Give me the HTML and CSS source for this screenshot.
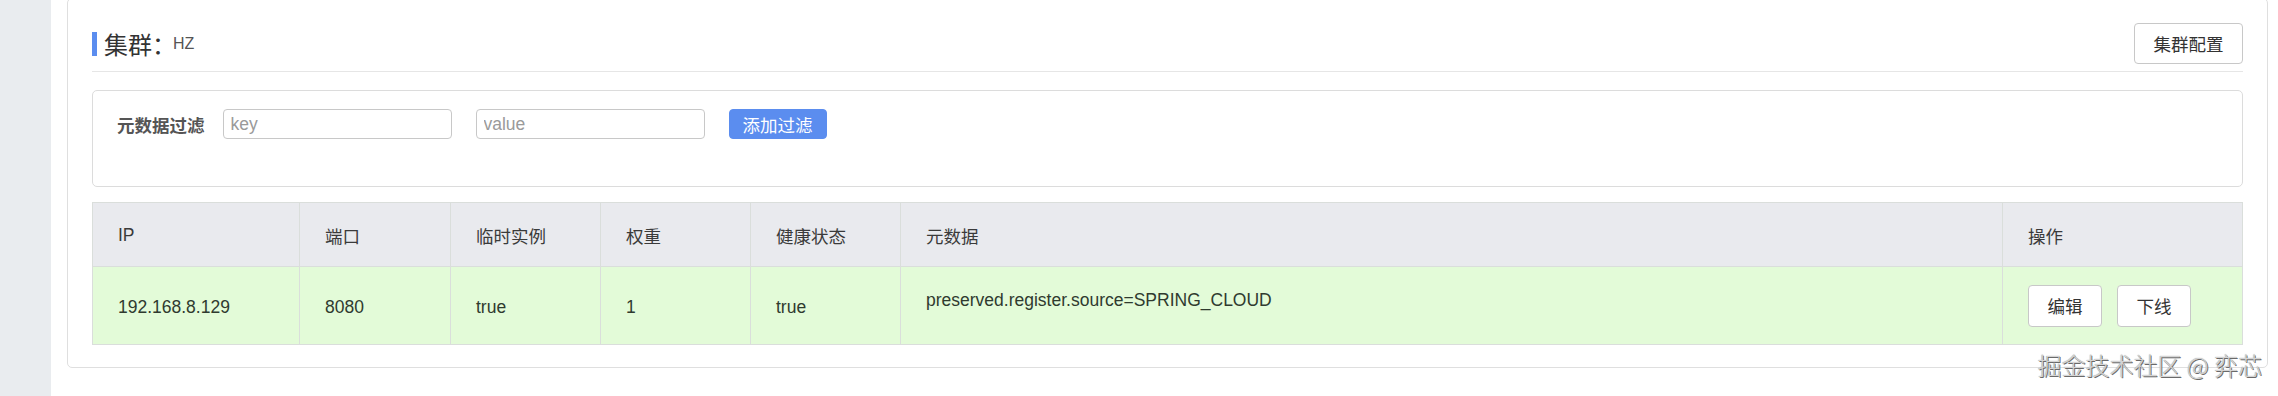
FILE: index.html
```html
<!DOCTYPE html>
<html lang="zh-CN">
<head>
    <meta charset="UTF-8">
    <meta name="viewport" content="width=device-width, initial-scale=1.0">
    <title>集群 - HZ</title>
    <link rel="stylesheet" href="styles.css">
</head>
<body>
    <div class="layout">
        <div class="sidebar"></div>

        <div class="main">
            <div class="card">
                <div class="card-head">
                    <div class="cluster-title">
                        <span class="accent"></span>
                        <span class="title-text">集群：</span>
                        <span class="cluster-name">HZ</span>
                    </div>
                    <button class="btn">集群配置</button>
                </div>

                <div class="filter-box">
                    <div class="filter-row">
                        <label class="filter-label">元数据过滤</label>
                        <input class="filter-input" type="text" placeholder="key">
                        <input class="filter-input" type="text" placeholder="value">
                        <button class="btn btn-primary">添加过滤</button>
                    </div>
                </div>

                <table class="instance-table">
                    <colgroup>
                        <col class="col-ip">
                        <col class="col-port">
                        <col class="col-small">
                        <col class="col-small">
                        <col class="col-small">
                        <col>
                        <col class="col-ops">
                    </colgroup>
                    <thead>
                        <tr>
                            <th>IP</th>
                            <th>端口</th>
                            <th>临时实例</th>
                            <th>权重</th>
                            <th>健康状态</th>
                            <th>元数据</th>
                            <th>操作</th>
                        </tr>
                    </thead>
                    <tbody>
                        <tr class="row-ok">
                            <td>192.168.8.129</td>
                            <td>8080</td>
                            <td>true</td>
                            <td>1</td>
                            <td>true</td>
                            <td><div class="meta">preserved.register.source=SPRING_CLOUD</div></td>
                            <td>
                                <div class="ops">
                                    <button class="btn btn-sm">编辑</button>
                                    <button class="btn btn-sm">下线</button>
                                </div>
                            </td>
                        </tr>
                    </tbody>
                </table>
            </div>
        </div>
    </div>

    <div class="watermark">掘金技术社区 @ 弈芯</div>
</body>
</html>
```

FILE: styles.css
```css
body {
    margin: 0;
    font-family: "Liberation Sans", "Noto Sans CJK SC", sans-serif;
    font-size: 17.5px;
    color: #333;
    background: #fff;
    overflow: hidden;
}

.layout {
    display: flex;
    height: 396px;
}

.sidebar {
    width: 51px;
    flex-shrink: 0;
    background: #e9ecef;
}

.main {
    flex: 1;
    padding: 0 10px 0 16px;
}

.card {
    margin-top: -2px;
    border: 1px solid #dfdfdf;
    border-radius: 5px;
    padding: 0 24px 22px;
}

.card-head {
    display: flex;
    align-items: center;
    justify-content: space-between;
    padding: 24px 0 7px;
    border-bottom: 1px solid #e6e6e6;
}

.cluster-title {
    display: flex;
    align-items: center;
}

.accent {
    width: 5px;
    height: 24px;
    background: #5b8def;
    margin-right: 7px;
}

.title-text {
    font-size: 24px;
    color: #333;
}

.cluster-name {
    font-size: 16px;
    color: #555;
    margin-left: -3px;
}

.btn {
    font-family: inherit;
    font-size: 17.5px;
    color: #333;
    background: #fff;
    border: 1px solid #c8c8c8;
    border-radius: 4px;
    height: 41px;
    width: 109px;
    padding: 0;
    cursor: pointer;
}

.btn-primary {
    height: 30px;
    width: 98px;
    margin-left: 24px;
    color: #fff;
    background: #5b8def;
    border-color: #5b8def;
}

.btn-sm {
    width: 74px;
    height: 42px;
}

.filter-box {
    margin-top: 18px;
    border: 1px solid #dcdcdc;
    border-radius: 5px;
    padding: 18px 24px 47px;
}

.filter-row {
    display: flex;
    align-items: center;
}

.filter-label {
    font-weight: bold;
    color: #555;
    margin-right: 18px;
}

.filter-input {
    width: 229px;
    height: 30px;
    box-sizing: border-box;
    border: 1px solid #c8c8c8;
    border-radius: 4px;
    padding: 0 7px;
    font-family: inherit;
    font-size: 17.5px;
    color: #333;
}

.filter-input + .filter-input {
    margin-left: 24px;
}

.filter-input::placeholder {
    color: #9a9a9a;
}

.instance-table {
    margin-top: 15px;
    width: 100%;
    table-layout: fixed;
    border-collapse: collapse;
}

.col-ip { width: 207px; }
.col-port { width: 151px; }
.col-small { width: 150px; }
.col-ops { width: 240px; }

.instance-table th,
.instance-table td {
    text-align: left;
    padding: 0 25px;
    border: 1px solid #dadedb;
    font-weight: normal;
}

.instance-table th {
    height: 61px;
    padding-top: 2px;
    background: #e9eaee;
    color: #3a3a3a;
}

.instance-table td {
    height: 74px;
    padding-top: 3px;
}

.row-ok td {
    background: #e3fbd8;
    color: #2f3a2f;
}

.meta {
    margin-bottom: 14px;
}

.ops {
    display: flex;
    gap: 15px;
    margin-top: -3px;
}

.watermark {
    position: absolute;
    right: 16px;
    bottom: 14px;
    font-family: "Noto Sans CJK SC", sans-serif;
    font-size: 24px;
    font-weight: 300;
    color: #d4d4d4;
    text-shadow: 1px 1px 0 #6a6a6a, 0 0 1px #888;
}
```
